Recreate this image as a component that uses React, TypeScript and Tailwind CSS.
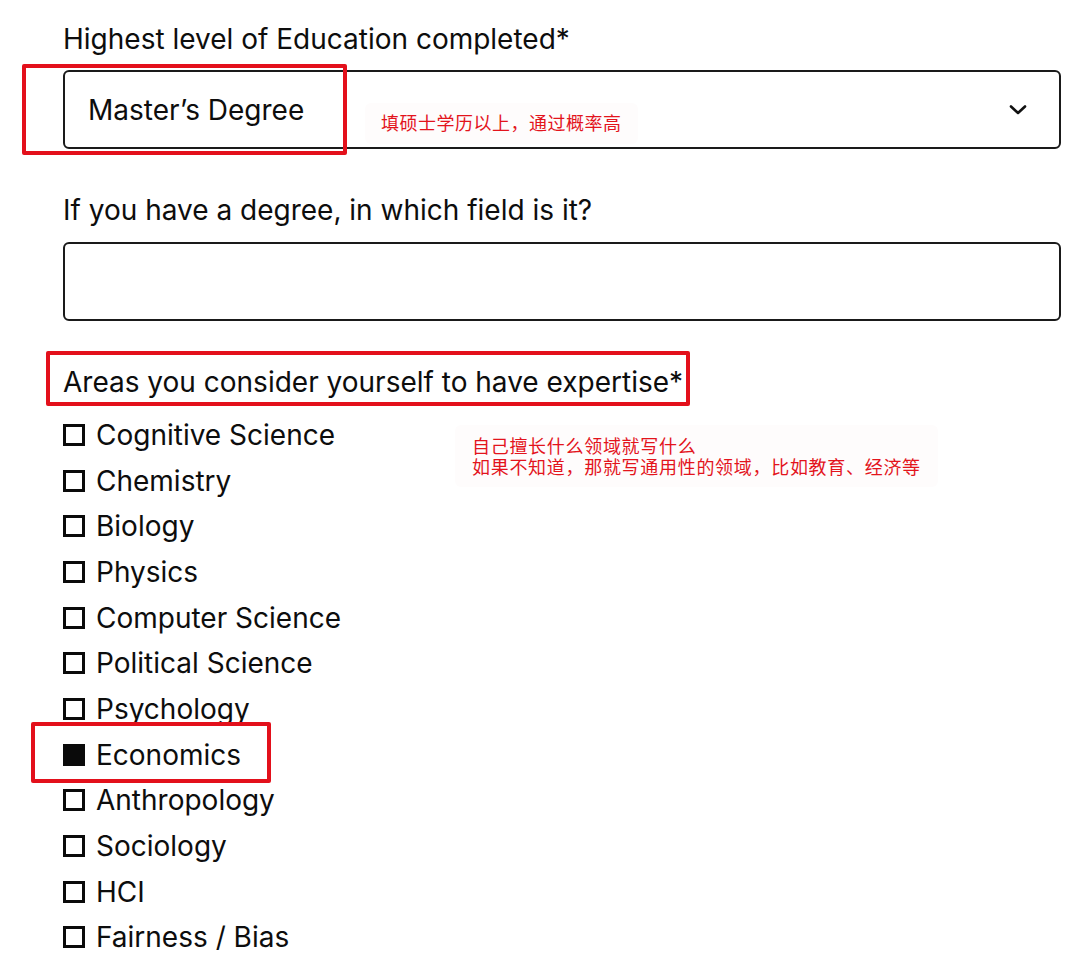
import React from "react";

const options = [
  "Cognitive Science",
  "Chemistry",
  "Biology",
  "Physics",
  "Computer Science",
  "Political Science",
  "Psychology",
  "Economics",
  "Anthropology",
  "Sociology",
  "HCI",
  "Fairness / Bias",
];

const cjk = { fontFamily: "'Noto Sans CJK SC', 'Noto Sans', sans-serif" };

export default function App() {
  return (
    <div
      className="relative w-[1080px] h-[962px] overflow-hidden bg-white pl-[63px] pr-[19px] text-[#0d0d0d]"
      style={{ fontFamily: "Inter, 'Noto Sans', sans-serif" }}
    >
      <div className="pt-[21px] h-[57px] text-[28px] leading-[36px]">
        Highest level of Education completed*
      </div>
      <div className="relative mt-[13px] h-[79px] rounded-[6px] border-2 border-[#1a1a1a] flex items-center pl-[23px] pr-[32px]">
        <span className="text-[28px] flex-1">Master’s Degree</span>
        <svg width="18" height="12" viewBox="0 0 18 12">
          <path d="M2 2.5 L9 9 L16 2.5" fill="none" stroke="#111" strokeWidth="2.6" strokeLinecap="round" strokeLinejoin="round" />
        </svg>
        <div className="absolute left-[-43px] top-[-8px] w-[325px] h-[91px] border-[4px] border-[#e3101b] rounded-[2px]" />
        <div className="absolute left-[300px] top-[31px] px-[16px] py-[8px] bg-[#fefcfc] rounded-[6px]">
          <span className="text-[18px] leading-[22px] text-[#e3141c] tracking-[0.5px]" style={cjk}>
            填硕士学历以上，通过概率高
          </span>
        </div>
      </div>

      <div className="mt-[43px] h-[36px] text-[28px] leading-[36px]">
        If you have a degree, in which field is it?
      </div>
      <div className="mt-[14px] h-[79px] rounded-[6px] border-2 border-[#1a1a1a]" />

      <div className="relative mt-[43px] h-[36px] text-[28px] leading-[36px]">
        <span>Areas you consider yourself to have expertise*</span>
        <div className="absolute left-[-17px] top-[-13px] w-[644px] h-[55px] border-[4px] border-[#e3101b] rounded-[2px]" />
      </div>

      <div className="relative mt-[12px] flex flex-col">
        {options.map((o) => (
          <div key={o} className="relative h-[45.7px] flex items-center gap-[11px]">
            <div
              className={
                o === "Economics"
                  ? "w-[22px] h-[22px] bg-[#0a0a0a]"
                  : "w-[22px] h-[22px] border-[3px] border-[#0a0a0a]"
              }
            />
            <span className="text-[28px] leading-[36px]">{o}</span>
            {o === "Economics" && (
              <div className="absolute left-[-32px] top-[-10px] w-[240px] h-[61px] border-[4px] border-[#e3101b] rounded-[2px]" />
            )}
          </div>
        ))}
        <div className="absolute left-[392px] top-[13px] px-[17px] py-[10px] bg-[#fefcfc] rounded-[6px]">
          <div className="flex flex-col text-[18px] leading-[21px] text-[#e3141c] tracking-[0.7px]" style={cjk}>
            <span>自己擅长什么领域就写什么</span>
            <span>如果不知道，那就写通用性的领域，比如教育、经济等</span>
          </div>
        </div>
      </div>
    </div>
  );
}
